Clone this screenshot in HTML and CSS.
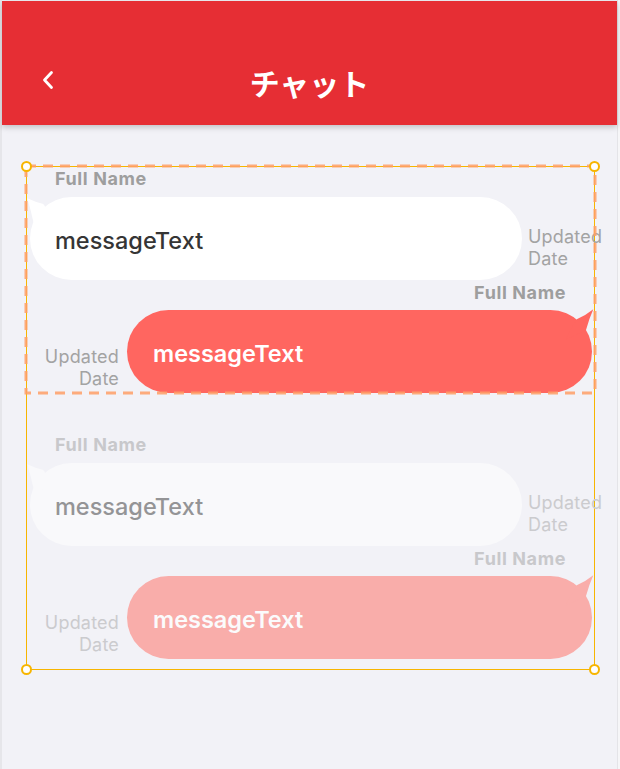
FILE: index.html
```html
<!DOCTYPE html>
<html lang="ja">
<head>
<meta charset="utf-8">
<title>チャット</title>
<link rel="stylesheet" href="styles.css">
</head>
<body>
<div class="screen">
  <header class="header">
    <div class="nav">
      <a class="back" href="#" aria-label="戻る">
        <svg width="14" height="20" viewBox="0 0 14 20"><path d="M10.5 2.5 L3.5 10 L10.5 17.5" fill="none" stroke="#fff" stroke-width="2.8" stroke-linecap="round" stroke-linejoin="round"/></svg>
      </a>
      <h1 class="title">チャット</h1>
      <span class="nav-spacer"></span>
    </div>
  </header>

  <main class="content">
    <section class="frame">
      <div class="pair">
        <div class="name name-left">Full Name</div>
        <div class="row row-left">
          <div class="bubble bubble-in">
            <svg class="tail tail-in" width="50" height="40" viewBox="0 0 50 40"><path d="M2.3 6.3 Q10 10 18.3 12 L35 35 L8.4 30 Q5.5 17 2.3 6.3 Z"/></svg>
            <span class="msg msg-in">messageText</span>
          </div>
          <div class="date date-in">Updated Date</div>
        </div>
        <div class="name name-right">Full Name</div>
        <div class="row row-right">
          <div class="date date-out">Updated Date</div>
          <div class="bubble bubble-out">
            <svg class="tail tail-out" width="50" height="40" viewBox="0 0 50 40"><path d="M46.3 4.3 Q38 11 29.7 14.3 L18 35 L39 25 Q42 14 46.3 4.3 Z"/></svg>
            <span class="msg msg-out">messageText</span>
          </div>
        </div>
        <svg class="dash" width="100%" height="100%"><rect x="0" y="0" width="100%" height="100%"/></svg>
      </div>

      <div class="pair pair-faded">
        <div class="name name-left">Full Name</div>
        <div class="row row-left">
          <div class="bubble bubble-in">
            <svg class="tail tail-in" width="50" height="40" viewBox="0 0 50 40"><path d="M2.3 6.3 Q10 10 18.3 12 L35 35 L8.4 30 Q5.5 17 2.3 6.3 Z"/></svg>
            <span class="msg msg-in">messageText</span>
          </div>
          <div class="date date-in">Updated Date</div>
        </div>
        <div class="name name-right">Full Name</div>
        <div class="row row-right">
          <div class="date date-out">Updated Date</div>
          <div class="bubble bubble-out">
            <svg class="tail tail-out" width="50" height="40" viewBox="0 0 50 40"><path d="M46.3 4.3 Q38 11 29.7 14.3 L18 35 L39 25 Q42 14 46.3 4.3 Z"/></svg>
            <span class="msg msg-out">messageText</span>
          </div>
        </div>
      </div>

      <span class="handle handle-tl"></span>
      <span class="handle handle-tr"></span>
      <span class="handle handle-bl"></span>
      <span class="handle handle-br"></span>
    </section>
  </main>
</div>
</body>
</html>
```

FILE: styles.css
```css
* { box-sizing: border-box; }

html, body {
  margin: 0;
  padding: 0;
}

body {
  background: #f6f6f8;
  font-family: Inter, "Noto Sans", "Noto Sans CJK JP", sans-serif;
  height: 769px;
  overflow: hidden;
}

.screen {
  margin-left: 2px;
  width: 615px;
  height: 769px;
  padding-top: 1px;
  background: #f2f2f7;
  box-shadow: -2px 0 0 #e6e6ea, 1px 0 0 #e4e4e8;
}

.header {
  height: 124px;
  background: #e62e34;
  padding-top: 38px;
  box-shadow: 0 2px 6px rgba(0, 0, 0, 0.22);
  position: relative;
  z-index: 1;
}

.nav {
  height: 85px;
  display: grid;
  grid-template-columns: 1fr auto 1fr;
  align-items: center;
  padding: 0 39px;
}

.back {
  display: flex;
  align-items: center;
  width: 14px;
  height: 20px;
  margin-top: -4px;
}

.title {
  margin: 0;
  color: #fff;
  font-family: "Noto Sans CJK JP", sans-serif;
  font-weight: 700;
  font-size: 30px;
  line-height: 40px;
  letter-spacing: 0;
}

.content {
  padding: 41px 0 0 24px;
}

.frame {
  position: relative;
  width: 569px;
  border: 1px solid #f7b500;
  padding: 0 1px 10px 3px;
  display: flex;
  flex-direction: column;
  gap: 40px;
}

.pair {
  position: relative;
  display: flex;
  flex-direction: column;
  --c-name: #9e9e9e;
  --c-date: #a3a3a3;
  --c-in: #ffffff;
  --c-out: #ff6660;
  --c-msg-in: #353535;
  --c-msg-out: #ffffff;
}

.pair-faded {
  --c-name: #c8c8cb;
  --c-date: #cbcbce;
  --c-in: #f9f9fb;
  --c-out: #f9adaa;
  --c-msg-in: #949496;
  --c-msg-out: #fbfbfc;
}

.name {
  margin-top: 2px;
  font-size: 18px;
  line-height: 20px;
  font-weight: 700;
  color: var(--c-name);
  letter-spacing: 0.6px;
}

.name-left {
  padding-left: 25px;
  margin-bottom: 8px;
}

.name-right {
  margin-top: 3px;
  margin-bottom: 7px;
  text-align: right;
  padding-right: 27px;
}

.row {
  display: flex;
  align-items: flex-end;
}

.row-left { gap: 6px; }

.row-right {
  justify-content: flex-end;
  gap: 8px;
  padding-right: 1px;
}

.bubble {
  position: relative;
  height: 83px;
  border-radius: 41.5px;
  display: flex;
  align-items: center;
  padding-top: 4px;
}

.bubble-in {
  width: 492px;
  flex: none;
  background: var(--c-in);
  padding-left: 25px;
}

.bubble-out {
  width: 465px;
  flex: none;
  background: var(--c-out);
  padding-left: 26px;
}

.tail {
  position: absolute;
  top: -5px;
  overflow: visible;
}

.tail-in {
  left: -5px;
  fill: var(--c-in);
}

.tail-out {
  right: -5px;
  fill: var(--c-out);
}

.msg {
  position: relative;
  font-size: 23.5px;
  line-height: 28px;
  letter-spacing: 0;
}

.msg-in {
  color: var(--c-msg-in);
  font-weight: 500;
}

.msg-out {
  color: var(--c-msg-out);
  font-weight: 600;
}

.date {
  width: min-content;
  font-size: 18px;
  line-height: 22px;
  color: var(--c-date);
  letter-spacing: 0.2px;
}

.date-in {
  margin-bottom: 10px;
  text-align: left;
}

.date-out {
  margin-bottom: 3px;
  text-align: right;
}

.dash {
  position: absolute;
  top: -1px;
  left: -4px;
  width: 569px;
  height: 227px;
  overflow: visible;
  pointer-events: none;
}

.dash rect {
  fill: none;
  stroke: #ff9f66;
  stroke-opacity: 0.85;
  stroke-width: 3;
  stroke-dasharray: 10 7;
}

.handle {
  position: absolute;
  width: 11px;
  height: 11px;
  border-radius: 50%;
  background: #fff;
  border: 2px solid #f7b500;
  z-index: 2;
}

.handle-tl { top: -6px; left: -6px; }
.handle-tr { top: -6px; right: -6px; }
.handle-bl { bottom: -6px; left: -6px; }
.handle-br { bottom: -6px; right: -6px; }
```
